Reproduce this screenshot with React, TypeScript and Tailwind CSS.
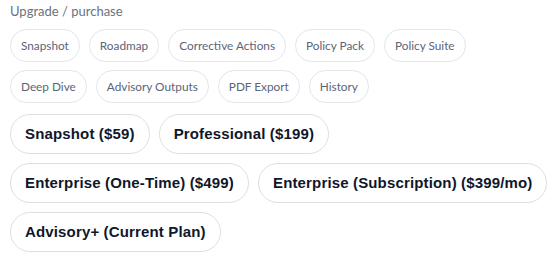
import React from "react";

const small = [
  "Snapshot",
  "Roadmap",
  "Corrective Actions",
  "Policy Pack",
  "Policy Suite",
  "Deep Dive",
  "Advisory Outputs",
  "PDF Export",
  "History",
];

const plans = [
  "Snapshot ($59)",
  "Professional ($199)",
  "Enterprise (One-Time) ($499)",
  "Enterprise (Subscription) ($399/mo)",
  "Advisory+ (Current Plan)",
];

export default function App() {
  return (
    <div className="w-[556px] h-[262px] bg-white pl-[10px] pt-[2px]">
      <div className="font-['Lato',sans-serif] text-[13px] leading-[18px] text-[#6b7280]">
        Upgrade / purchase
      </div>
      <div className="mt-[9px] w-[536px] flex flex-wrap gap-x-[9px] gap-y-[8px]">
        {small.map((s) => (
          <button
            key={s}
            className="h-[33px] px-[10px] rounded-full border border-[#e2e5ea] bg-white font-['Lato',sans-serif] text-[11.8px] text-[#5b6578]"
          >
            {s}
          </button>
        ))}
      </div>
      <div className="mt-[11px] w-[544px] flex flex-wrap gap-x-[9px] gap-y-[9px]">
        {plans.map((p) => (
          <button
            key={p}
            className="h-[40px] px-[14px] rounded-full border border-[#dedfe2] bg-white font-['Liberation_Sans',Arial,sans-serif] text-[15px] font-bold tracking-[0.15px] text-[#0f172a]"
          >
            {p}
          </button>
        ))}
      </div>
    </div>
  );
}
